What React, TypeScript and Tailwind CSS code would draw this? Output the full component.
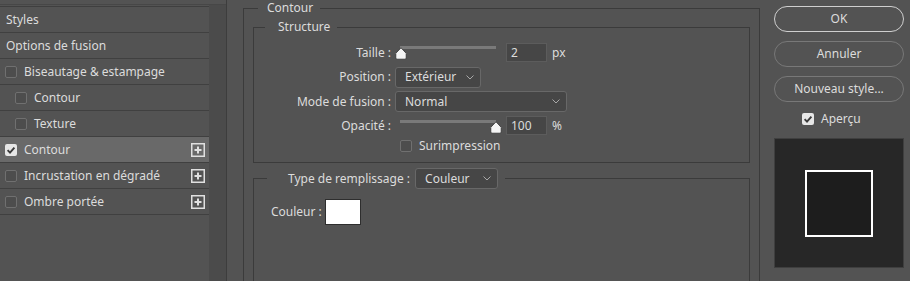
import type { ReactNode } from "react";

const LAYERS = [
  { label: "Styles", kind: "plain" },
  { label: "Options de fusion", kind: "plain" },
  { label: "Biseautage & estampage", kind: "check" },
  { label: "Contour", kind: "sub" },
  { label: "Texture", kind: "sub" },
  { label: "Contour", kind: "check", on: true, plus: true, active: true },
  { label: "Incrustation en dégradé", kind: "check", plus: true },
  { label: "Ombre portée", kind: "check", plus: true },
];

function Check({ on }: { on?: boolean }) {
  if (on) {
    return (
      <span className="flex h-[12px] w-[12px] shrink-0 items-center justify-center rounded-[2px] bg-[#e6e6e6]">
        <svg viewBox="0 0 12 12" className="h-[12px] w-[12px]">
          <path d="M2.6 6.2 L5 8.6 L9.4 3.6" fill="none" stroke="#3a3a3a" strokeWidth="1.9" />
        </svg>
      </span>
    );
  }
  return <span className="h-[12px] w-[12px] shrink-0 rounded-[2px] border border-[#707070] bg-[#4d4d4d]" />;
}

function PlusBox() {
  return (
    <svg viewBox="0 0 14 14" className="ml-auto mr-[4px] h-[14px] w-[14px]">
      <rect x="0.75" y="0.75" width="12.5" height="12.5" fill="none" stroke="#e0e0e0" strokeWidth="1.5" />
      <path d="M3.5 7 H10.5 M7 3.5 V10.5" stroke="#e0e0e0" strokeWidth="2" />
    </svg>
  );
}

function Select({ value, className }: { value: string; className: string }) {
  return (
    <div
      className={`flex items-center justify-between rounded-[3px] border border-[#686868] bg-[#464646] pl-[9px] pr-[6px] ${className}`}
    >
      <span>{value}</span>
      <svg viewBox="0 0 8 5" className="h-[5px] w-[8px]">
        <path d="M0.5 0.5 L4 4 L7.5 0.5" fill="none" stroke="#a8a8a8" strokeWidth="1" />
      </svg>
    </div>
  );
}

function Thumb({ className }: { className: string }) {
  return (
    <svg viewBox="0 0 12 13" className={`absolute h-[13px] w-[12px] ${className}`}>
      <path
        d="M6 0.8 L11.2 6.3 L11.2 11 Q11.2 12.2 10 12.2 L2 12.2 Q0.8 12.2 0.8 11 L0.8 6.3 Z"
        fill="#f4f4f4"
        stroke="#2e2e2e"
        strokeWidth="0.8"
      />
    </svg>
  );
}

function Row({ label, children, className }: { label: string; children: ReactNode; className: string }) {
  return (
    <div className={`flex items-center ${className}`}>
      <span className="w-[141px] shrink-0 pr-[4px] text-right">{label}</span>
      {children}
    </div>
  );
}

function NumBox({ value }: { value: string }) {
  return (
    <div className="ml-[10px] flex h-[19px] w-[41px] items-center border border-[#5c5c5c] bg-[#464646] pl-[4px]">
      {value}
    </div>
  );
}

export default function App() {
  return (
    <div className="flex h-[281px] w-[910px] overflow-hidden bg-[#535353] font-['Noto_Sans',sans-serif] text-[12px] leading-[16px] text-[#dcdcdc]">
      {/* Style list */}
      <div className="flex w-[227px] shrink-0 flex-col border-r border-[#3d3d3d] pt-[4px]">
        <div className="flex flex-1 border-t border-[#474747]">
          <div className="w-[209px] pt-[1px]">
            <div className="border-t border-[#3f3f3f]">
              {LAYERS.map((l, i) => (
                <div
                  key={i}
                  className={`flex h-[26px] items-center border-b border-[#404040] ${
                    l.active ? "bg-[#696969]" : ""
                  } ${l.kind === "plain" ? "pl-[6px]" : l.kind === "sub" ? "pl-[15px]" : "pl-[5px]"}`}
                >
                  {l.kind !== "plain" && <Check on={l.on} />}
                  <span className={l.kind === "plain" ? "" : "ml-[7px]"}>{l.label}</span>
                  {l.plus && <PlusBox />}
                </div>
              ))}
            </div>
          </div>
          <div className="w-[17px] bg-[#4b4b4b]" />
        </div>
      </div>

      {/* Settings */}
      <div className="flex pl-[16px]">
        <fieldset className="h-[400px] w-[517px] shrink-0 border border-[#3b3b3b] px-[9px] pt-[3px]">
          <legend className="ml-[5px] pl-[9px] pr-[7px] leading-[16px]">Contour</legend>

          <fieldset className="border border-[#3b3b3b] pb-[9px] pt-[8px]">
            <legend className="ml-[11px] pl-[13px] pr-[7px] leading-[16px]">Structure</legend>

            <Row label="Taille :" className="h-[19px]">
              <div className="relative ml-[5px] h-[19px] w-[96px]">
                <div className="mt-[3px] h-[3px] bg-[#7a7a7a]" />
                <Thumb className="left-[-5px] top-[4px]" />
              </div>
              <NumBox value="2" />
              <span className="ml-[5px]">px</span>
            </Row>

            <Row label="Position :" className="mt-[4px] h-[22px]">
              <Select value="Extérieur" className="h-[21px] w-[86px]" />
            </Row>

            <Row label="Mode de fusion :" className="mt-[3px] h-[21px]">
              <Select value="Normal" className="h-[21px] w-[172px]" />
            </Row>

            <Row label="Opacité :" className="mt-[4px] h-[19px]">
              <div className="relative ml-[5px] h-[19px] w-[96px]">
                <div className="mt-[4px] h-[3px] bg-[#7a7a7a]" />
                <Thumb className="left-[90px] top-[5px]" />
              </div>
              <NumBox value="100" />
              <span className="ml-[5px]">%</span>
            </Row>

            <div className="ml-[146px] mt-[3px] flex h-[15px] items-center gap-[7px]">
              <Check />
              <span>Surimpression</span>
            </div>
          </fieldset>

          <fieldset className="mt-[5px] h-[200px] border border-[#3b3b3b] pt-[10px]">
            <legend className="ml-[13px] pl-[21px] pr-[7px]">
              <div className="flex items-center gap-[5px]">
                <span>Type de remplissage :</span>
                <Select value="Couleur" className="h-[21px] w-[83px]" />
              </div>
            </legend>
            <div className="flex items-center gap-[3px] pl-[17px]">
              <span>Couleur :</span>
              <div className="h-[26px] w-[36px] border border-[#2e2e2e] bg-white" />
            </div>
          </fieldset>
        </fieldset>

        {/* Buttons + preview */}
        <div className="ml-[14px] flex w-[130px] shrink-0 flex-col pt-[6px]">
          <button className="h-[26px] rounded-full border border-[#cfcfcf] text-center">OK</button>
          <button className="mt-[9px] h-[26px] rounded-full border border-[#787878] text-center">Annuler</button>
          <button className="mt-[9px] h-[26px] rounded-full border border-[#787878] text-center">
            Nouveau style...
          </button>
          <div className="mt-[9px] flex h-[16px] items-center gap-[7px] pl-[28px]">
            <Check on />
            <span>Aperçu</span>
          </div>
          <div className="mt-[11px] flex h-[130px] w-[130px] items-center justify-center border border-[#3f3f3f] bg-[#272727]">
            <div className="h-[67px] w-[68px] border-2 border-white bg-[#1d1d1d]" />
          </div>
        </div>
      </div>
    </div>
  );
}
